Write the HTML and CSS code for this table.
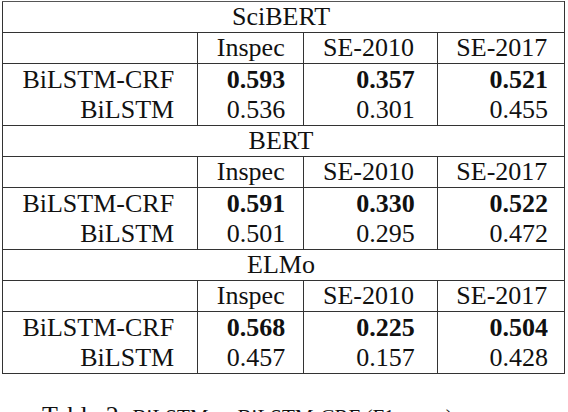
FILE: index.html
```html
<!DOCTYPE html>
<html lang="en">
<head>
  <meta charset="UTF-8" />
  <meta name="viewport" content="width=device-width, initial-scale=1.0" />
  <title>Table 2: BiLSTM vs BiLSTM-CRF</title>
  <link rel="stylesheet" href="styles.css">
</head>
<body>
  <table class="results">
    <tr class="model"><td colspan="4">SciBERT</td></tr>
    <tr class="cols"><td></td><td>Inspec</td><td>SE-2010</td><td>SE-2017</td></tr>
    <tr class="first"><td class="name">BiLSTM-CRF</td><td><b>0.593</b></td><td><b>0.357</b></td><td><b>0.521</b></td></tr>
    <tr class="last"><td class="name">BiLSTM</td><td>0.536</td><td>0.301</td><td>0.455</td></tr>

    <tr class="model"><td colspan="4">BERT</td></tr>
    <tr class="cols"><td></td><td>Inspec</td><td>SE-2010</td><td>SE-2017</td></tr>
    <tr class="first"><td class="name">BiLSTM-CRF</td><td><b>0.591</b></td><td><b>0.330</b></td><td><b>0.522</b></td></tr>
    <tr class="last"><td class="name">BiLSTM</td><td>0.501</td><td>0.295</td><td>0.472</td></tr>

    <tr class="model"><td colspan="4">ELMo</td></tr>
    <tr class="cols"><td></td><td>Inspec</td><td>SE-2010</td><td>SE-2017</td></tr>
    <tr class="first"><td class="name">BiLSTM-CRF</td><td><b>0.568</b></td><td><b>0.225</b></td><td><b>0.504</b></td></tr>
    <tr class="last"><td class="name">BiLSTM</td><td>0.457</td><td>0.157</td><td>0.428</td></tr>
  </table>

  <p class="caption">Table 2: <span class="small">BiLSTM vs BiLSTM-CRF (F1-score)</span></p>
</body>
</html>
```

FILE: styles.css
```css
body {
  font-family: "Liberation Serif", "Times New Roman", serif;
  color: #111;
  background: #fff;
  margin: 0;
  padding: 1px 3px 0 2px;
}
.results {
  border-collapse: collapse;
  width: 563px;
  font-size: 26px;
  line-height: 30px;
}
.results td {
  padding: 0 18px;
  border-left: 1px solid #333;
  border-right: 1px solid #333;
  text-align: right;
  white-space: nowrap;
}
.results td:nth-child(1) { width: 155px; padding-right: 23px; }
.results td:nth-child(2) { width: 71px; }
.results td:nth-child(3) { width: 94px; padding-right: 22px; }
.results td:nth-child(4) { width: 94px; padding-right: 16px; }
.results .model td {
  text-align: center;
  border-top: 1px solid #555;
  border-bottom: 1px solid #333;
}
.results .cols td {
  text-align: center;
  border-bottom: 1px solid #333;
}
.results .first td {
  line-height: 31px;
}
.results .last td {
  border-bottom: 1px solid #333;
}
.caption {
  margin: 27px 0 0 40px;
  font-size: 26px;
  line-height: 30px;
}
.caption .small {
  font-size: 21px;
}
```
